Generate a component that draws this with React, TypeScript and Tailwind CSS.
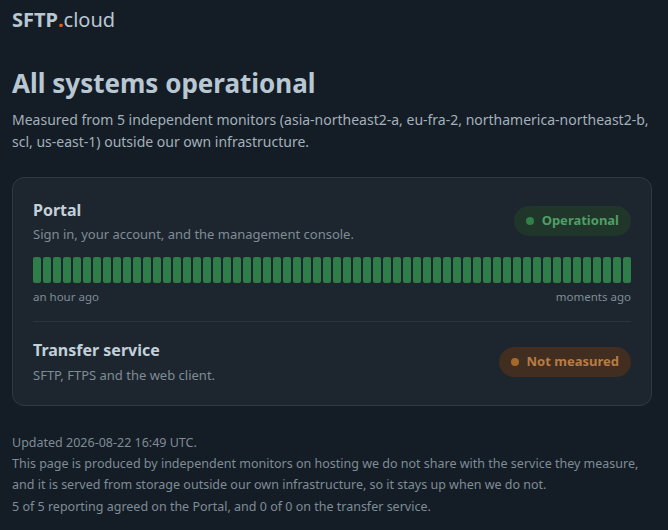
const bars = Array.from({ length: 60 }, (_, idx) => idx);

function Badge({ label, tone }: { label: string; tone: 'green' | 'orange' }) {
  const isGreen = tone === 'green';
  return (
    <div
      className={`flex h-[30px] items-center gap-2 rounded-full px-3 text-[13px] font-bold ${
        isGreen ? 'bg-[#20362a] text-[#4f9e65]' : 'bg-[#412e20] text-[#b87c45]'
      }`}
    >
      <span className={`h-2 w-2 rounded-full ${isGreen ? 'bg-[#2f8148]' : 'bg-[#a5692a]'}`} />
      {label}
    </div>
  );
}

export default function App() {
  return (
    <div className="h-[530px] w-[668px] overflow-hidden bg-[#141d25] font-[system-ui,sans-serif] text-[#b9c7d2]">
      <div className="w-[640px] ml-3">
        <div className="flex h-10 items-center text-[20px] leading-none text-[#b9c7d2]">
          <span className="font-bold">SFTP</span>
          <span className="font-bold text-[#e8591c]">.</span>
          <span>cloud</span>
        </div>

        <h1 className="mt-[24px] text-[26px] font-bold leading-[38px] text-[#b9c7d2]">
          All systems operational
        </h1>
        <p className="mt-[7px] text-[14px] leading-[22px] text-[#a3b0bb]">
          Measured from 5 independent monitors (asia-northeast2-a, eu-fra-2, northamerica-northeast2-b, scl, us-east-1) outside our own infrastructure.
        </p>

        <div className="mt-6 rounded-xl border border-[#2d3a42] bg-[#1d262e] px-5 pt-5">
          <div className="border-b border-[#2a353d] pb-4">
            <div className="flex items-center justify-between">
              <div>
                <h2 className="text-[16px] font-bold leading-6 text-[#c3d0da]">Portal</h2>
                <p className="mt-[2px] text-[13px] leading-5 text-[#7f8c97]">
                  Sign in, your account, and the management console.
                </p>
              </div>
              <Badge label="Operational" tone="green" />
            </div>
            <div className="mt-[13px] flex gap-[2px]">
              {bars.map((idx) => (
                <div key={`bar-${idx}`} className="h-[26px] w-2 rounded-[2px] bg-[#2f7d49]" />
              ))}
            </div>
            <div className="mt-[6px] flex justify-between text-[11.5px] leading-4 text-[#7f8c97]">
              <span>an hour ago</span>
              <span>moments ago</span>
            </div>
          </div>

          <div className="flex items-center justify-between pb-[20px] pt-4">
            <div>
              <h2 className="text-[16px] font-bold leading-6 text-[#c3d0da]">Transfer service</h2>
              <p className="mt-[3px] text-[13px] leading-5 text-[#7f8c97]">SFTP, FTPS and the web client.</p>
            </div>
            <Badge label="Not measured" tone="orange" />
          </div>
        </div>

        <div className="mt-[26px] text-[12.5px] leading-[21.2px] text-[#7f8c97]">
          <p>Updated 2026-08-22 16:49 UTC.</p>
          <p>
            This page is produced by independent monitors on hosting we do not share with the service they measure, and it is served from storage outside our own infrastructure, so it stays up when we do not.
          </p>
          <p>5 of 5 reporting agreed on the Portal, and 0 of 0 on the transfer service.</p>
        </div>
      </div>
    </div>
  );
}
